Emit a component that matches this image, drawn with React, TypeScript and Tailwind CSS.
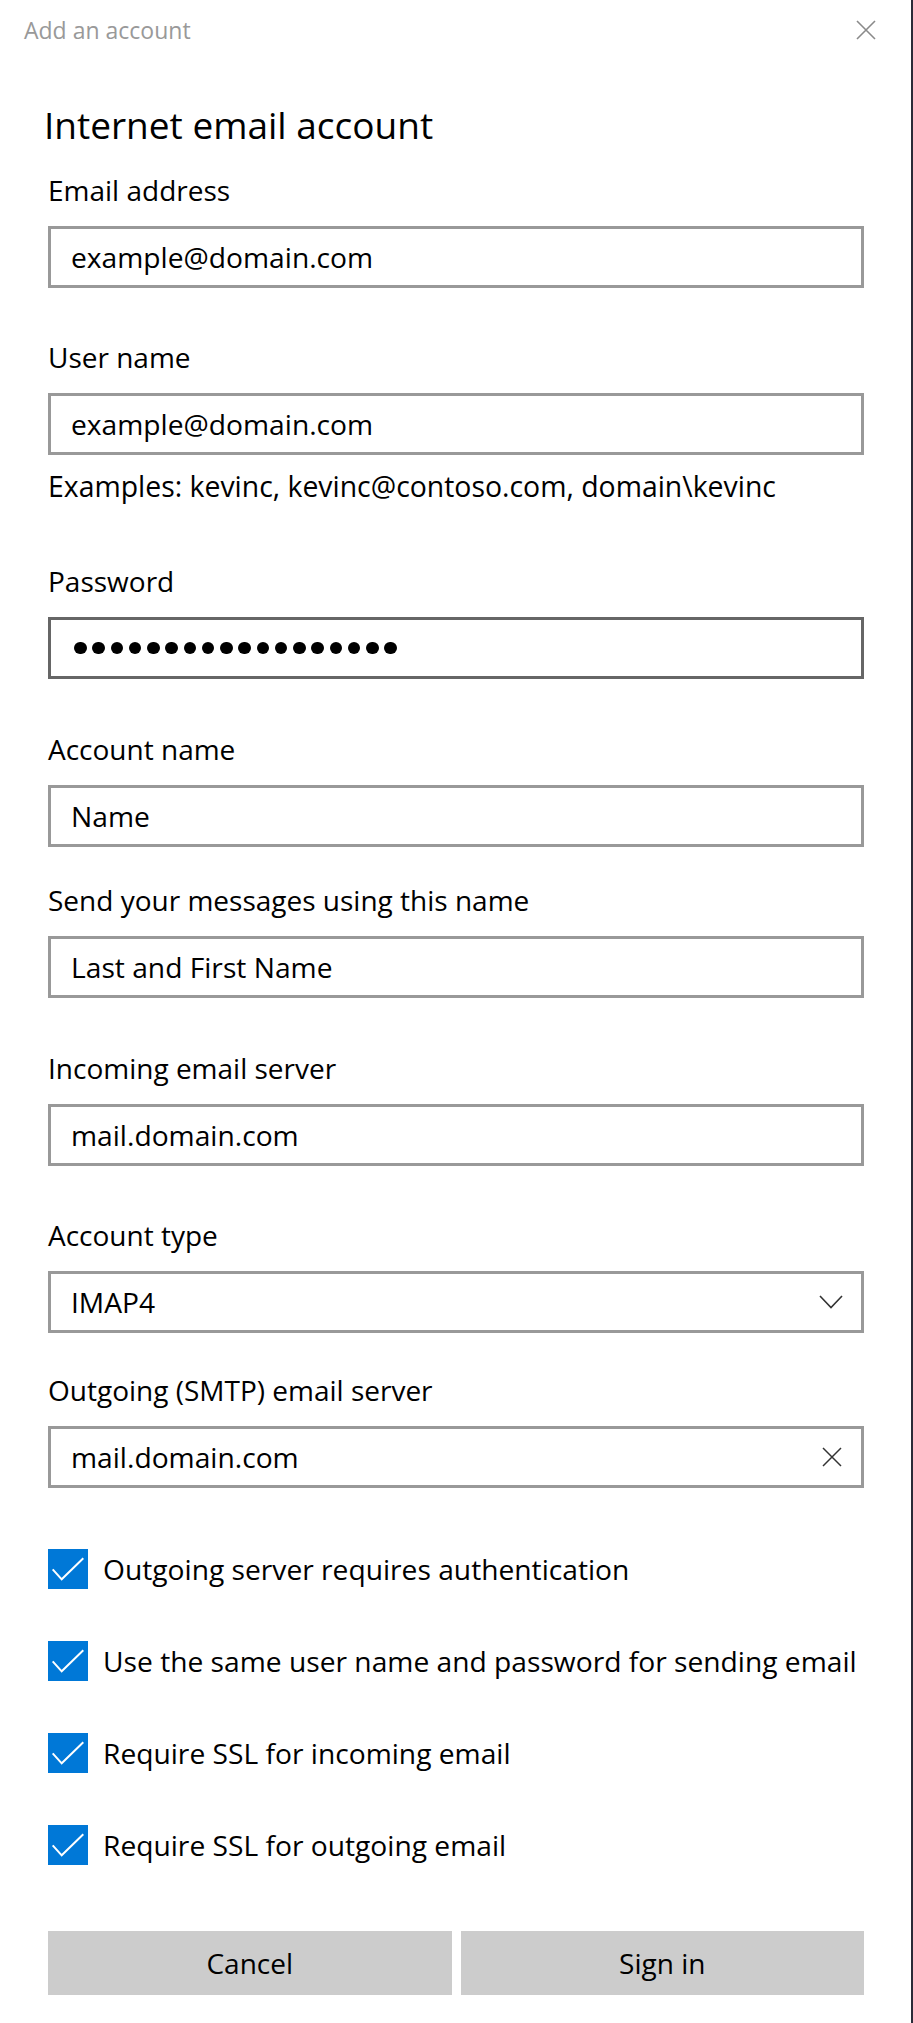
import React from 'react';

interface FieldProps {
  label: string;
  className: string;
  children: React.ReactNode;
}

const TextBox: React.FC<{ dark?: boolean; right?: React.ReactNode; children: React.ReactNode }> = ({
  dark = false,
  right,
  children,
}) => (
  <div
    className={`flex h-[62px] items-center border-[3px] pl-[20px] pr-[18px] ${
      dark ? 'border-[#666666]' : 'border-[#999999]'
    }`}
  >
    <div className="flex flex-1 items-center text-[28.2px] leading-[36px] text-black">{children}</div>
    {right}
  </div>
);

const Field: React.FC<FieldProps> = ({ label, className, children }) => (
  <div className={className}>
    <div className="mb-[18px] text-[28px] leading-[36px] text-black">{label}</div>
    {children}
  </div>
);

const Check: React.FC<{ label: string }> = ({ label }) => (
  <div className="flex items-center gap-[15px]">
    <div className="h-[40px] w-[40px] shrink-0 bg-[#0078d7]">
      <svg width="40" height="40" viewBox="0 0 40 40">
        <path d="M4.7 20.3 L13.7 30.3 L35.3 9.3" fill="none" stroke="#ffffff" strokeWidth="2" />
      </svg>
    </div>
    <span className="text-[28.2px] leading-[40px] text-black">{label}</span>
  </div>
);

export default function App() {
  return (
    <div className="flex h-[2023px] w-[913px] flex-col border-r-2 border-[#2b2b38] bg-white font-['Open_Sans','Noto_Sans',sans-serif]">
      {/* Title bar */}
      <div className="flex h-[60px] items-center justify-between pl-[24px] pr-[35px]">
        <span className="text-[23px] leading-[30px] text-[#999999]">Add an account</span>
        <svg width="20" height="20" viewBox="0 0 20 20">
          <path d="M1 1 L19 19 M19 1 L1 19" stroke="#8a8a8a" strokeWidth="1.6" />
        </svg>
      </div>

      <div className="flex flex-col pl-[48px] pr-[47px]">
        <h1 className="-ml-[4px] mt-[41px] text-[37px] leading-[48px] font-normal text-black">
          Internet email account
        </h1>

        <Field label="Email address" className="mt-[23px]">
          <TextBox>example@domain.com</TextBox>
        </Field>

        <Field label="User name" className="mt-[51px]">
          <TextBox>example@domain.com</TextBox>
        </Field>

        <div className="mt-[13px] text-[28.4px] leading-[36px] text-black">
          Examples: kevinc, kevinc@contoso.com, domain\kevinc
        </div>

        <Field label="Password" className="mt-[59px]">
          <TextBox dark>
            <div className="ml-[3px] flex gap-[5.75px]">
              {Array.from({ length: 18 }).map((_, i) => (
                <span key={i} className="block h-[12.5px] w-[12.5px] rounded-full bg-black" />
              ))}
            </div>
          </TextBox>
        </Field>

        <Field label="Account name" className="mt-[52px]">
          <TextBox>Name</TextBox>
        </Field>

        <Field label="Send your messages using this name" className="mt-[35px]">
          <TextBox>Last and First Name</TextBox>
        </Field>

        <Field label="Incoming email server" className="mt-[52px]">
          <TextBox>mail.domain.com</TextBox>
        </Field>

        <Field label="Account type" className="mt-[51px]">
          <TextBox
            right={
              <svg width="24" height="14" viewBox="0 0 24 14">
                <path d="M1 1 L12 12.5 L23 1" fill="none" stroke="#333333" strokeWidth="1.6" />
              </svg>
            }
          >
            IMAP4
          </TextBox>
        </Field>

        <Field label="Outgoing (SMTP) email server" className="mt-[39px]">
          <TextBox
            right={
              <svg width="20" height="20" viewBox="0 0 20 20" className="mr-[1px]">
                <path d="M1 1 L19 19 M19 1 L1 19" stroke="#333333" strokeWidth="1.5" />
              </svg>
            }
          >
            mail.domain.com
          </TextBox>
        </Field>

        <div className="mt-[61px] flex flex-col gap-[52px]">
          <Check label="Outgoing server requires authentication" />
          <Check label="Use the same user name and password for sending email" />
          <Check label="Require SSL for incoming email" />
          <Check label="Require SSL for outgoing email" />
        </div>

        <div className="mt-[66px] grid grid-cols-2 gap-[9px]">
          <button className="h-[64px] bg-[#cccccc] text-[28px] text-black">Cancel</button>
          <button className="h-[64px] bg-[#cccccc] text-[28px] text-black">Sign in</button>
        </div>
      </div>
    </div>
  );
}
